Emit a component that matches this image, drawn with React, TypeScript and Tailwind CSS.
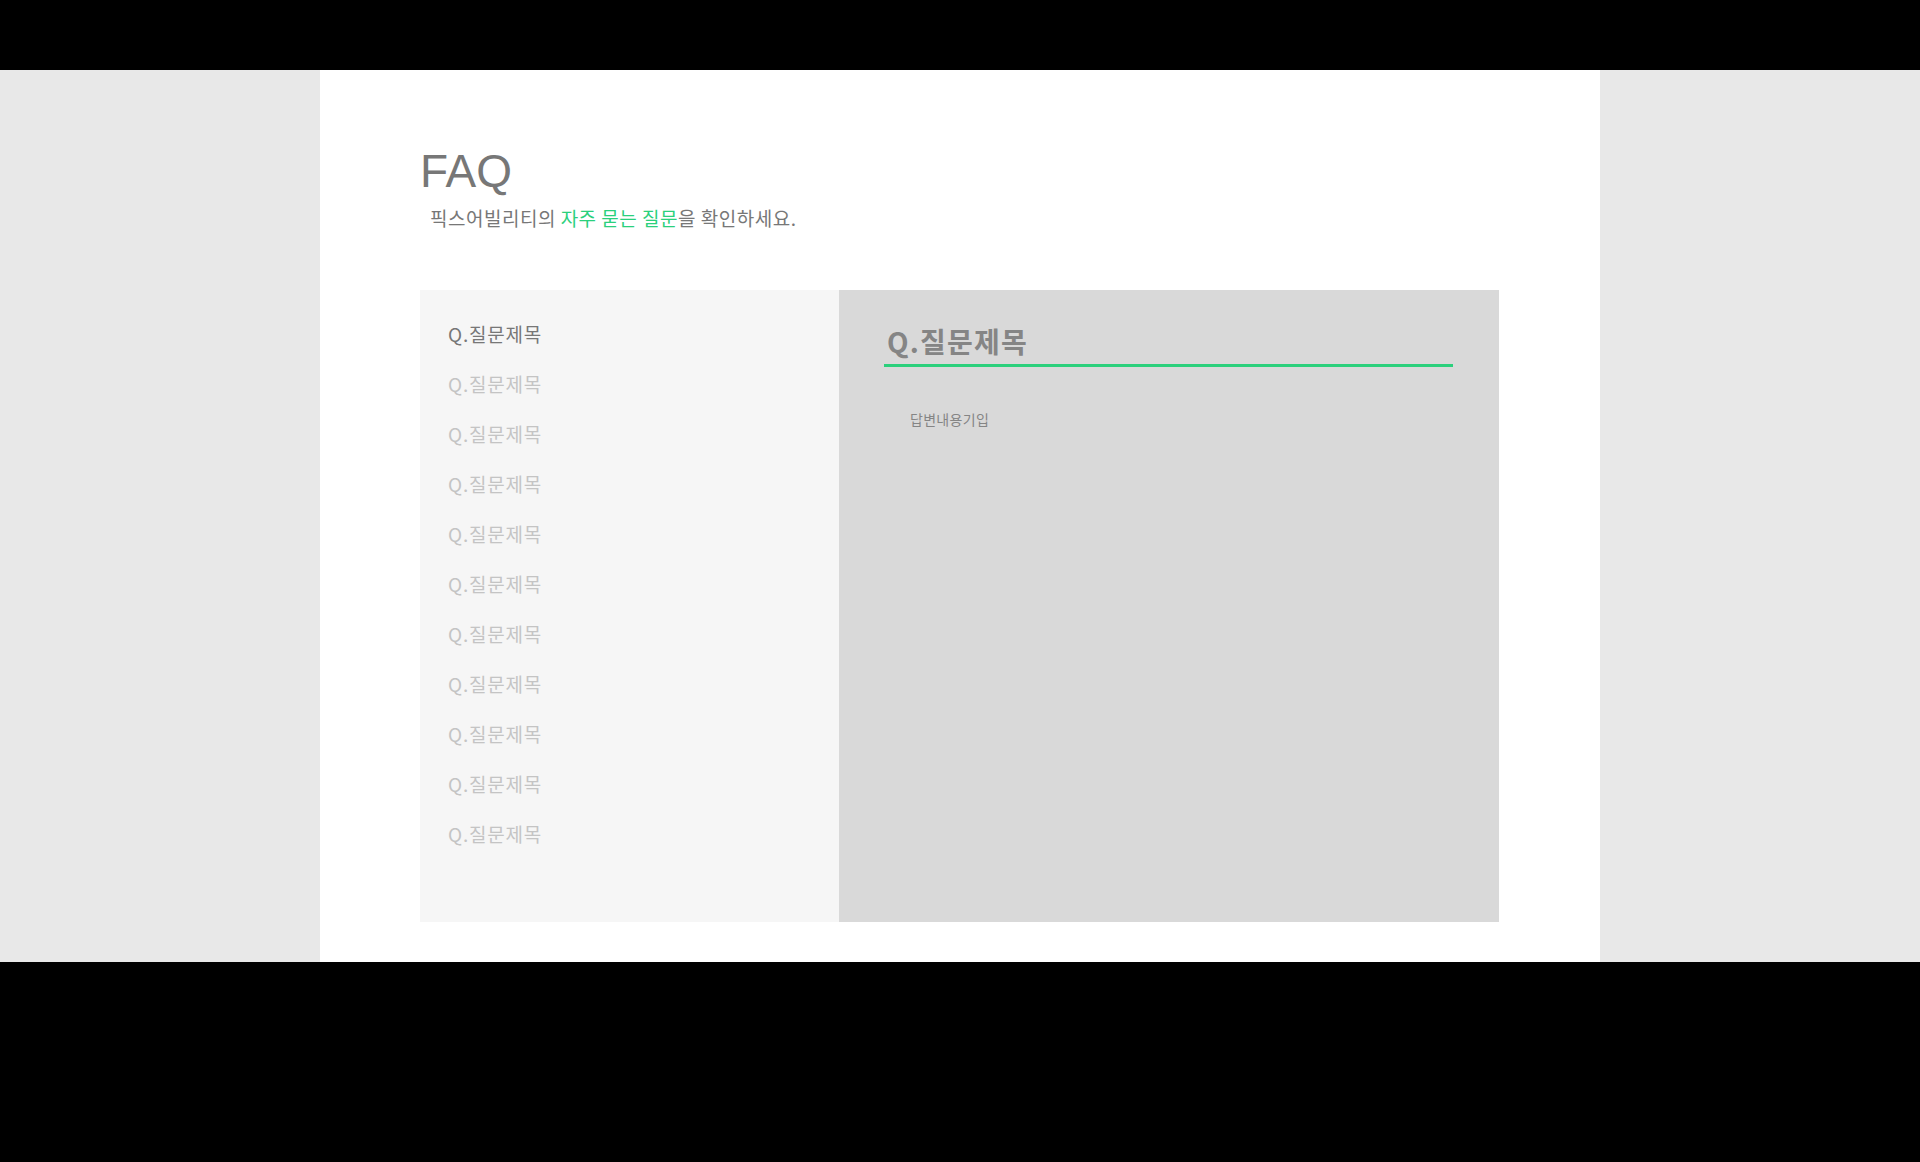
import React from "react";

const items = Array.from({ length: 11 }, (_, i) => i);

export default function App() {
  return (
    <div className="w-[1920px] h-[1162px] bg-black flex flex-col">
      <div className="h-[70px] shrink-0" />
      <div className="h-[892px] shrink-0 bg-[#e8e8e8] flex justify-center">
        <div className="w-[1280px] h-full bg-white pt-[78px] pl-[100px] pr-[101px] [font-family:'Liberation_Sans','Noto_Sans_CJK_KR',sans-serif]">
          <h1 className="text-[46px] leading-[46px] text-[#777777] font-normal [font-family:'Liberation_Sans',Arial,sans-serif]">
            FAQ
          </h1>
          <p className="mt-[12px] pl-[10px] text-[19px] leading-[24px] text-[#777777] [font-family:'Noto_Sans_CJK_KR',sans-serif] tracking-[0.5px]">
            픽스어빌리티의 <span className="text-[#2bd07c]">자주 묻는 질문</span>을 확인하세요.
          </p>
          <div className="mt-[60px] h-[632px] flex">
            <div className="w-[419px] h-full bg-[#f6f6f6] pt-[19px] pl-[28px]">
              {items.map((i) => (
                <div
                  key={i}
                  className={`h-[50px] flex items-center text-[19px] tracking-[0.8px] [font-family:'Noto_Sans_CJK_KR',sans-serif] ${
                    i === 0 ? "text-[#777777]" : "text-[#c4c4c4]"
                  }`}
                >
                  Q.질문제목
                </div>
              ))}
            </div>
            <div className="w-[660px] h-full bg-[#d9d9d9] pt-[34px] pl-[45px] pr-[46px]">
              <div className="h-[43px] border-b-[3px] border-[#2bd07c] flex items-end pb-[5px] pl-[3px]">
                <span className="text-[28px] leading-[36px] font-bold text-[#858585] tracking-[1.2px] [font-family:'Noto_Sans_CJK_KR',sans-serif]">
                  Q.질문제목
                </span>
              </div>
              <p className="mt-[42px] pl-[26px] text-[14px] leading-[20px] text-[#858585] tracking-[0.3px] [font-family:'Noto_Sans_CJK_KR',sans-serif]">
                답변내용기입
              </p>
            </div>
          </div>
        </div>
      </div>
      <div className="flex-1" />
    </div>
  );
}
